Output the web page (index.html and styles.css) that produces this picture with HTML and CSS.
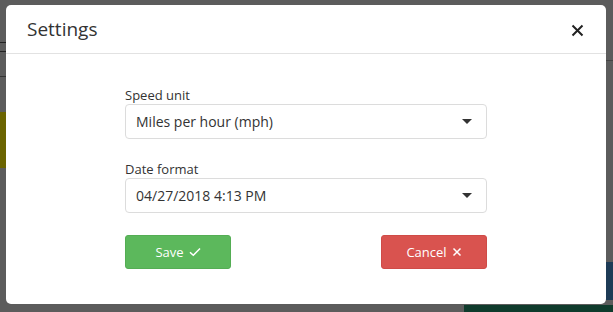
FILE: index.html
```html
<!DOCTYPE html>
<html lang="en">
<head>
  <meta charset="UTF-8" />
  <title>Settings</title>
  <link rel="stylesheet" href="styles.css">
</head>
<body>
  <!-- Page behind the backdrop -->
  <div class="page">
    <div class="bg-mark mark-yellow"></div>
    <div class="bg-mark mark-blue"></div>
    <div class="bg-mark mark-green"></div>
    <div class="bg-mark line-a"></div>
    <div class="bg-mark line-b"></div>
    <div class="bg-mark line-c"></div>
    <div class="bg-mark line-d"></div>
  </div>

  <!-- Settings modal -->
  <div class="modal">
    <div class="modal-header">
      <h4 class="modal-title">Settings</h4>
      <button class="close" aria-label="Close">
        <svg width="13" height="13" viewBox="0 0 13 13"><path d="M1.5 1.5 L11.5 11.5 M11.5 1.5 L1.5 11.5" stroke="#222" stroke-width="2" fill="none"/></svg>
      </button>
    </div>
    <div class="modal-body">
      <form class="settings-form">
        <div class="field">
          <label>Speed unit</label>
          <div class="select">
            <span>Miles per hour (mph)</span>
            <span class="caret"></span>
          </div>
        </div>
        <div class="field">
          <label>Date format</label>
          <div class="select">
            <span>04/27/2018 4:13 PM</span>
            <span class="caret"></span>
          </div>
        </div>
        <div class="actions">
          <button type="button" class="btn btn-save">Save
            <svg width="12" height="10" viewBox="0 0 12 10"><path d="M1 5.2 L4.3 8.3 L11 1.5" stroke="#fff" stroke-width="1.5" fill="none"/></svg>
          </button>
          <button type="button" class="btn btn-cancel">Cancel
            <svg width="10" height="10" viewBox="0 0 10 10"><path d="M1.5 1.5 L8.5 8.5 M8.5 1.5 L1.5 8.5" stroke="#fff" stroke-width="1.5" fill="none"/></svg>
          </button>
        </div>
      </form>
    </div>
  </div>
</body>
</html>
```

FILE: styles.css
```css
* {
  margin: 0;
  padding: 0;
  box-sizing: border-box;
}

body {
  width: 613px;
  height: 312px;
  background: #5c5c5c;
  font-family: "Open Sans", "Noto Sans", sans-serif;
  color: #333;
  overflow: hidden;
  padding: 5px 7px 0 6px;
}

/* faint bits of the page under the backdrop */
.page {
  position: absolute;
  top: 0;
  left: 0;
  width: 613px;
  height: 312px;
}

.bg-mark { position: absolute; }
.mark-yellow { left: 0; top: 112px; width: 6px; height: 56px; background: #6b6400; }
.mark-blue { right: 0; top: 262px; width: 7px; height: 38px; background: #1d3b56; }
.mark-green { left: 464px; bottom: 0; width: 149px; height: 7px; background: #0f3b2c; }
.line-a { left: 0; top: 42px; width: 6px; height: 1px; background: #222; }
.line-b { left: 0; top: 51px; width: 6px; height: 1px; background: #222; }
.line-c { left: 0; top: 76px; width: 6px; height: 1px; background: #333; }
.line-d { right: 0; top: 60px; width: 7px; height: 1px; background: #444; }

.modal {
  position: relative;
  width: 600px;
  height: 299px;
  background: #fff;
  border-radius: 5px;
}

.modal-header {
  height: 49px;
  display: flex;
  align-items: center;
  justify-content: space-between;
  padding: 0 22px 0 21px;
  border-bottom: 1px solid #e2e2e2;
}

.modal-title {
  font-size: 19px;
  font-weight: 400;
  color: #333;
}

.close {
  border: none;
  background: none;
  display: flex;
  padding: 0;
  margin-top: 2px;
}

.modal-body {
  display: flex;
  justify-content: center;
  padding-top: 33px;
}

.settings-form {
  width: 362px;
  display: flex;
  flex-direction: column;
}

.field {
  display: flex;
  flex-direction: column;
  margin-bottom: 22px;
}

.field label {
  font-size: 13px;
  line-height: 17px;
  color: #333;
}

.select {
  height: 35px;
  border: 1px solid #dcdcdc;
  border-radius: 4px;
  display: flex;
  align-items: center;
  justify-content: space-between;
  padding: 0 14px 0 10px;
  font-size: 14px;
  color: #333;
}

.caret {
  width: 0;
  height: 0;
  border-left: 5px solid transparent;
  border-right: 5px solid transparent;
  border-top: 5px solid #333;
}

.actions {
  display: flex;
  justify-content: space-between;
}

.btn {
  width: 106px;
  height: 34px;
  border: 1px solid transparent;
  border-radius: 3px;
  color: #fff;
  font-family: inherit;
  font-size: 13px;
  display: flex;
  align-items: center;
  justify-content: center;
  gap: 5px;
}

.btn-save {
  background: #5cb85c;
  border-color: #54ad54;
}

.btn-cancel {
  background: #d9534f;
  border-color: #cf4b47;
}
```
